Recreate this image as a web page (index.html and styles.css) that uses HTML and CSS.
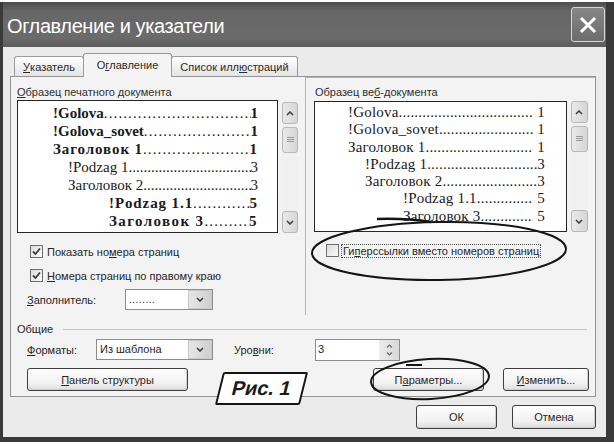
FILE: index.html
```html
<!DOCTYPE html>
<html lang="ru">
<head>
<meta charset="utf-8">
<title>Оглавление и указатели</title>
<link rel="stylesheet" href="styles.css">
</head>
<body>
<div class="window">
  <div class="titlebar">
    <span class="title">Оглавление и указатели</span>
    <span class="close"><svg width="18" height="18" viewBox="0 0 18 18"><path d="M3 3 L15 15 M15 3 L3 15" stroke="#fff" stroke-width="3" stroke-linecap="square"/></svg></span>
  </div>
  <div class="client">
    <div class="tabs">
      <div class="tab t1"><u>У</u>казатель</div>
      <div class="tab t2 active">О<u>г</u>лавление</div>
      <div class="tab t3">Список илл<u>ю</u>страций</div>
    </div>
    <div class="panel">
      <div class="top">
        <div class="print">
          <div class="label"><u>О</u>бразец печатного документа</div>
          <div class="preview-row">
            <div class="preview pp">
              <div class="toc b ind1"><span class="name">!Golova</span><span class="dots"></span><span class="num">1</span></div>
              <div class="toc b ind1"><span class="name">!Golova_sovet</span><span class="dots"></span><span class="num">1</span></div>
              <div class="toc b ind1 sp1"><span class="name">Заголовок 1 </span><span class="dots"></span><span class="num">1</span></div>
              <div class="toc ind2"><span class="name">!Podzag 1 </span><span class="dots"></span><span class="num">3</span></div>
              <div class="toc ind2"><span class="name">Заголовок 2 </span><span class="dots"></span><span class="num">3</span></div>
              <div class="toc b ind3 sp1"><span class="name">!Podzag 1.1</span><span class="dots"></span><span class="num">5</span></div>
              <div class="toc b ind3 sp2"><span class="name">Заголовок 3</span><span class="dots"></span><span class="num">5</span></div>
            </div>
            <div class="scroll">
              <div class="sbtn"><svg width="8" height="5" viewBox="0 0 8 5"><path d="M1 4 L4 1 L7 4" fill="none" stroke="#3a3a3a" stroke-width="1.5"/></svg></div>
              <div class="sbtn thumb"><svg width="7" height="6" viewBox="0 0 7 6"><path d="M0 0.5 H7 M0 2.5 H7 M0 4.5 H7" stroke="#9a9a9a" stroke-width="1"/></svg></div>
              <div class="track"></div>
              <div class="sbtn"><svg width="8" height="5" viewBox="0 0 8 5"><path d="M1 1 L4 4 L7 1" fill="none" stroke="#3a3a3a" stroke-width="1.5"/></svg></div>
            </div>
          </div>
          <div class="check c1"><span class="cbox"><svg width="9" height="9" viewBox="0 0 9 9"><path d="M1 4.5 L3.5 7 L8 1.5" fill="none" stroke="#3d3d3d" stroke-width="1.8"/></svg></span><span>Показать но<u>м</u>ера страниц</span></div>
          <div class="check c2"><span class="cbox"><svg width="9" height="9" viewBox="0 0 9 9"><path d="M1 4.5 L3.5 7 L8 1.5" fill="none" stroke="#3d3d3d" stroke-width="1.8"/></svg></span><span><u>Н</u>омера страниц по правому краю</span></div>
          <div class="field fill">
            <span class="flabel"><u>З</u>аполнитель:</span>
            <div class="select sel-fill"><span class="val dotsval">........</span><span class="arrow"><svg width="8" height="5" viewBox="0 0 8 5"><path d="M1 1 L4 4 L7 1" fill="none" stroke="#3a3a3a" stroke-width="1.5"/></svg></span></div>
          </div>
        </div>
        <div class="web">
          <div class="label">Образец ве<u>б</u>-документа</div>
          <div class="preview-row wrow">
            <div class="preview wp">
              <div class="toc ind1"><span class="name">!Golova</span><span class="dots"></span><span class="num gap">1</span></div>
              <div class="toc ind1"><span class="name">!Golova_sovet</span><span class="dots"></span><span class="num gap">1</span></div>
              <div class="toc ind1"><span class="name">Заголовок 1</span><span class="dots"></span><span class="num gap">1</span></div>
              <div class="toc ind2"><span class="name">!Podzag 1</span><span class="dots"></span><span class="num">3</span></div>
              <div class="toc ind2"><span class="name">Заголовок 2</span><span class="dots"></span><span class="num">3</span></div>
              <div class="toc ind3"><span class="name">!Podzag 1.1 </span><span class="dots"></span><span class="num gap">5</span></div>
              <div class="toc ind3"><span class="name">Заголовок 3</span><span class="dots"></span><span class="num gap">5</span></div>
            </div>
            <div class="scroll ws">
              <div class="sbtn"><svg width="8" height="5" viewBox="0 0 8 5"><path d="M1 4 L4 1 L7 4" fill="none" stroke="#3a3a3a" stroke-width="1.5"/></svg></div>
              <div class="sbtn thumb"><svg width="7" height="6" viewBox="0 0 7 6"><path d="M0 0.5 H7 M0 2.5 H7 M0 4.5 H7" stroke="#9a9a9a" stroke-width="1"/></svg></div>
              <div class="track"></div>
              <div class="sbtn"><svg width="8" height="5" viewBox="0 0 8 5"><path d="M1 1 L4 4 L7 1" fill="none" stroke="#3a3a3a" stroke-width="1.5"/></svg></div>
            </div>
          </div>
          <div class="check c3"><span class="cbox"></span><span class="focus">Ги<u>п</u>ерссылки вместо номеров страниц</span></div>
        </div>
      </div>
      <div class="group"><span>Общие</span><span class="gline"></span></div>
      <div class="field formats">
        <span class="flabel fl1"><u>Ф</u>орматы:</span>
        <div class="select sel-fmt"><span class="val">Из шаблона</span><span class="arrow"><svg width="8" height="5" viewBox="0 0 8 5"><path d="M1 1 L4 4 L7 1" fill="none" stroke="#3a3a3a" stroke-width="1.5"/></svg></span></div>
        <span class="flabel fl2">Уро<u>в</u>ни:</span>
        <div class="spin"><span class="val">3</span><span class="spinbtns"><svg width="7" height="4" viewBox="0 0 7 4"><path d="M1 3.5 L3.5 1 L6 3.5" fill="none" stroke="#6a6a6a" stroke-width="1.2"/></svg><svg width="7" height="4" viewBox="0 0 7 4"><path d="M1 0.5 L3.5 3 L6 0.5" fill="none" stroke="#6a6a6a" stroke-width="1.2"/></svg></span></div>
      </div>
      <div class="btnrow">
        <button class="btn b-struct"><u>П</u>анель структуры</button>
        <button class="btn b-params">П<u>а</u>раметры...</button>
        <button class="btn b-edit"><u>И</u>зменить...</button>
      </div>
    </div>
    <div class="dlgbtns">
      <button class="btn b-ok">ОК</button>
      <button class="btn b-cancel">Отмена</button>
    </div>
  </div>
</div>

<svg class="marks" width="614" height="447" viewBox="0 0 614 447">
  <ellipse cx="439" cy="251" rx="127" ry="29" transform="rotate(-1 439 251)" fill="none" stroke="#151515" stroke-width="2"/>
  <path d="M377 219 Q405 218 431 222" fill="none" stroke="#151515" stroke-width="2.5"/>
  <ellipse cx="430" cy="379" rx="59" ry="20" transform="rotate(-3 430 379)" fill="none" stroke="#151515" stroke-width="2"/>
  <path d="M406 365 L422 365" stroke="#151515" stroke-width="2"/>
</svg>
<div class="fig"><span class="figtext">Рис. 1</span></div>
</body>
</html>
```
FILE: styles.css
```css
* { box-sizing: border-box; }
html, body { margin: 0; padding: 0; }
body {
  width: 614px;
  height: 447px;
  background: #ffffff;
  position: relative;
  overflow: hidden;
  font-family: "Liberation Sans", Arial, sans-serif;
  font-size: 11px;
  color: #262626;
}
u { text-decoration: underline; text-underline-offset: 1px; }

.window {
  margin-top: 2px;
  width: 614px;
  height: 440px;
  border-left: 3px solid #3a3a3a;
  border-right: 8px solid #3a3a3a;
  border-bottom: 5px solid #3a3a3a;
  background: #ebebeb;
  display: flex;
  flex-direction: column;
}

.titlebar {
  height: 45px;
  flex: none;
  display: flex;
  align-items: center;
  justify-content: space-between;
  padding: 0 1px 0 4px;
  background: linear-gradient(#4e4e4e, #666666 20%, #6b6b6b 80%, #5c5c5c);
}
.title {
  color: #ffffff;
  font-size: 20px;
  letter-spacing: -0.4px;
  padding-top: 3px;
}
.close {
  width: 34px;
  height: 35px;
  border: 1px solid #d5d5d5;
  border-radius: 3px;
  background: linear-gradient(#878787, #6c6c6c);
  display: flex;
  align-items: center;
  justify-content: center;
}

.client {
  flex: 1;
  display: flex;
  flex-direction: column;
  padding: 9px 10px 0 7px;
}

.tabs {
  display: flex;
  align-items: flex-end;
  height: 20px;
  padding-left: 4px;
  position: relative;
  z-index: 1;
}
.tab {
  height: 20px;
  border: 1px solid #9b9b9b;
  border-bottom: none;
  border-radius: 3px 3px 0 0;
  background: linear-gradient(#ffffff, #e4e4e4);
  display: flex;
  align-items: center;
  justify-content: center;
  padding-top: 1px;
  color: #2a2a2a;
}
.t1 { width: 70px; }
.t2 { width: 89px; margin-left: -1px; margin-right: -1px; }
.t3 { width: 127px; }
.tab.active {
  height: 24px;
  margin-bottom: -1px;
  background: #f4f4f4;
  position: relative;
  z-index: 2;
  padding-bottom: 3px;
}

.panel {
  height: 321px;
  flex: none;
  border: 1px solid #939393;
  background: #f3f3f3;
  display: flex;
  flex-direction: column;
}
.top { display: flex; height: 238px; flex: none; }
.print { width: 296px; padding: 8px 0 0 6px; display: flex; flex-direction: column; }
.web {
  width: 292px;
  border-left: 1px solid #b4b4b4;
  border-top: 1px solid #b4b4b4;
  padding: 7px 0 0 8px;
  display: flex;
  flex-direction: column;
}
.label { height: 14px; line-height: 14px; color: #2e2e2e; }
.web .label { padding-left: 1px; }

.preview-row { display: flex; gap: 4px; margin-top: 1px; height: 133px; }
.wrow { margin-top: 2px; height: 131px; }
.preview {
  background: #ffffff;
  border: 1px solid #262626;
  font-family: "Liberation Serif", "Times New Roman", serif;
  color: #1a1a1a;
  overflow: hidden;
}
.pp { width: 261px; padding: 3px 19px 0 0; font-size: 15px; }
.wp { width: 253px; padding: 2px 21px 0 0; font-size: 15px; letter-spacing: 0.2px; }
.toc { display: flex; white-space: nowrap; }
.pp .toc { height: 18px; line-height: 18px; }
.wp .toc { height: 17.3px; line-height: 17px; }
.toc .dots { flex: 1; overflow: hidden; }
.toc .dots::before { content: "................................................................................................"; }
.toc.b .dots { letter-spacing: 1.1px; font-weight: normal; }
.toc .num { flex: none; }
.toc .num.gap { padding-left: 4px; }
.toc.b { font-weight: bold; }
.pp .ind1 { padding-left: 35px; }
.pp .ind2 { padding-left: 50px; }
.pp .ind3 { padding-left: 91px; }
.wp .ind1 { padding-left: 33px; }
.wp .ind2 { padding-left: 50px; }
.wp .ind3 { padding-left: 88px; }
.sp1 { letter-spacing: 0.9px; }
.sp2 { letter-spacing: 1.4px; }

.scroll {
  width: 16px;
  margin-top: 2px;
  display: flex;
  flex-direction: column;
  background: #f0f0f0;
}
.ws { width: 17px; margin-top: 0; }
.sbtn {
  height: 22px;
  border: 1px solid #b8b8b8;
  border-radius: 3px;
  background: linear-gradient(90deg, #e9e9e9, #d6d6d6);
  display: flex;
  align-items: center;
  justify-content: center;
}
.thumb { height: 26px; margin-top: 3px; }
.track { flex: 1; }

.check { display: flex; align-items: center; height: 13px; }
.c1 { margin: 12px 0 0 13px; }
.c2 { margin: 11px 0 0 13px; }
.c3 { margin: 12px 0 0 12px; }
.cbox {
  width: 13px;
  height: 13px;
  border: 1px solid #6e6e6e;
  background: linear-gradient(135deg, #dcdcdc, #fbfbfb);
  display: flex;
  align-items: center;
  justify-content: center;
  margin-right: 4px;
  flex: none;
}
.c3 .cbox { margin-right: 3px; }
.focus { outline: 1px dotted #555; outline-offset: 0; padding: 0 1px; }

.field { display: flex; align-items: center; height: 21px; }
.fill { margin: 7px 0 0 10px; }
.flabel { flex: none; }
.fill .flabel { width: 98px; }
.select {
  height: 21px;
  border: 1px solid #8c8c8c;
  background: #ffffff;
  display: flex;
  align-items: stretch;
}
.select .val { flex: 1; padding-left: 3px; line-height: 19px; }
.dotsval { font-size: 10px; letter-spacing: 0.5px; }
.select .arrow {
  width: 24px;
  background: linear-gradient(90deg, #e6e6e6, #cfcfcf);
  border: 1px solid #c9c9c9;
  display: flex;
  align-items: center;
  justify-content: center;
}
.sel-fill { width: 88px; }
.sel-fmt { width: 117px; }

.group { display: flex; align-items: center; height: 14px; margin-top: 7px; padding-left: 6px; }
.gline { flex: 1; height: 1px; background: #c4c4c4; margin: 0 8px 0 10px; }

.formats { margin-top: 3px; padding-left: 16px; }
.fl1 { width: 69px; }
.fl2 { width: 81px; margin-left: 21px; }
.spin {
  width: 85px;
  height: 22px;
  border: 1px solid #8c8c8c;
  background: #ffffff;
  display: flex;
}
.spin .val { flex: 1; padding-left: 2px; line-height: 19px; }
.spinbtns {
  width: 20px;
  background: linear-gradient(90deg, #ececec, #d8d8d8);
  display: flex;
  flex-direction: column;
  align-items: center;
  justify-content: center;
  gap: 4px;
}

.btn {
  font-family: "Liberation Sans", Arial, sans-serif;
  font-size: 11px;
  color: #262626;
  height: 23px;
  border: 1px solid #3e3e3e;
  border-radius: 3px;
  background: linear-gradient(#fdfdfd, #f1f1f1 70%, #dcdcdc);
  padding: 0;
  box-shadow: inset -1px -1px 0 #cfcfcf;
}
.btnrow { display: flex; margin-top: 8px; padding-left: 16px; height: 23px; }
.b-struct { width: 161px; }
.b-params { width: 111px; margin-left: 185px; }
.b-edit { width: 86px; margin-left: 19px; }

.dlgbtns { display: flex; justify-content: flex-end; gap: 15px; margin-top: 8px; }
.b-ok { width: 81px; height: 24px; }
.b-cancel { width: 84px; height: 24px; }

.marks { position: absolute; left: 0; top: 0; pointer-events: none; }
.fig {
  position: absolute;
  left: 219px;
  top: 372px;
  width: 85px;
  height: 33px;
  border: 2px solid #151515;
  border-radius: 2px;
  background: #ffffff;
  transform: skewX(-14deg);
  display: flex;
  align-items: center;
  justify-content: center;
}
.figtext { font-weight: bold; font-size: 20px; color: #1a1a1a; }
```
